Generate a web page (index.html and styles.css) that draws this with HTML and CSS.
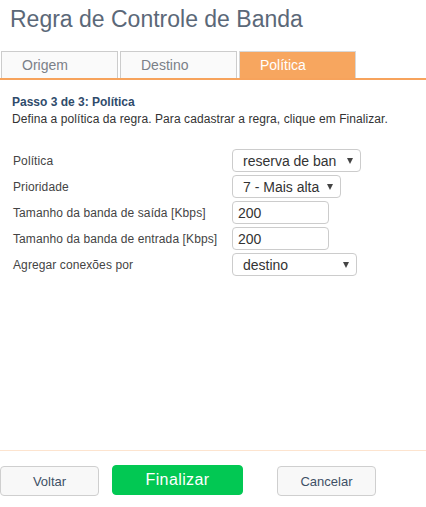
FILE: index.html
```html
<!DOCTYPE html>
<html lang="pt">
<head>
<meta charset="utf-8">
<title>Regra de Controle de Banda</title>
<link rel="stylesheet" href="styles.css">
</head>
<body>
<div class="page">
  <h1 class="title">Regra de Controle de Banda</h1>
  <div class="tabs">
    <div class="tab">Origem</div>
    <div class="tab">Destino</div>
    <div class="tab active">Política</div>
  </div>
  <div class="content">
    <div class="step">Passo 3 de 3: Política</div>
    <div class="desc">Defina a política da regra. Para cadastrar a regra, clique em Finalizar.</div>
    <div class="form">
      <div class="row">
        <label class="lbl">Política</label>
        <div class="sel w1"><span class="val">reserva de ban</span><i class="arrow"></i></div>
      </div>
      <div class="row">
        <label class="lbl">Prioridade</label>
        <div class="sel w2"><span class="val">7 - Mais alta</span><i class="arrow"></i></div>
      </div>
      <div class="row">
        <label class="lbl">Tamanho da banda de saída [Kbps]</label>
        <div class="inp">200</div>
      </div>
      <div class="row">
        <label class="lbl">Tamanho da banda de entrada [Kbps]</label>
        <div class="inp">200</div>
      </div>
      <div class="row">
        <label class="lbl">Agregar conexões por</label>
        <div class="sel w3"><span class="val">destino</span><i class="arrow"></i></div>
      </div>
    </div>
  </div>
  <div class="footer">
    <button class="btn">Voltar</button>
    <button class="btn primary">Finalizar</button>
    <button class="btn cancel">Cancelar</button>
  </div>
</div>
</body>
</html>
```
FILE: styles.css
```css
html, body {
  margin: 0;
  padding: 0;
  background: #fff;
  font-family: "Liberation Sans", Arial, sans-serif;
}
.page {
  width: 426px;
  height: 507px;
  display: flex;
  flex-direction: column;
}
.title {
  margin: 0;
  height: 51px;
  box-sizing: border-box;
  padding: 5px 0 0 10px;
  font-size: 23px;
  font-weight: normal;
  color: #5b6878;
  line-height: 28px;
}
.tabs {
  display: flex;
  gap: 2px;
  padding-left: 1px;
  border-bottom: 2px solid #f7a35c;
  height: 27px;
}
.tab {
  width: 117px;
  box-sizing: border-box;
  border: 1px solid #cccccc;
  border-bottom: none;
  background: #fafafa;
  color: #7a8088;
  font-size: 14px;
  line-height: 26px;
  padding-left: 20px;
}
.tab.active {
  background: #f7a65f;
  color: #fff;
  border-color: #d8d8d8;
}
.content {
  flex: 1;
  padding: 15px 0 0 12px;
}
.step {
  font-size: 12px;
  font-weight: bold;
  color: #2f4b6b;
  line-height: 15px;
}
.desc {
  font-size: 12px;
  color: #333;
  line-height: 15px;
  margin-top: 2px;
  letter-spacing: 0.08px;
}
.form {
  margin-top: 22px;
  display: flex;
  flex-direction: column;
  gap: 3px;
}
.row {
  display: flex;
  align-items: center;
  height: 23px;
}
.lbl {
  width: 219px;
  padding-left: 1px;
  font-size: 12px;
  color: #444;
  letter-spacing: 0.1px;
}
.sel, .inp {
  box-sizing: border-box;
  height: 23px;
  border: 1px solid #cccccc;
  border-radius: 4px;
  font-size: 14px;
  color: #333;
  display: flex;
  align-items: center;
  background: #fff;
}
.sel {
  padding-left: 10px;
  position: relative;
}
.val {
  white-space: nowrap;
}
.inp { padding-left: 5px; width: 97px; }
.w1 { width: 129px; }
.w2 { width: 109px; }
.w3 { width: 125px; }
.arrow {
  position: absolute;
  right: 7px;
  top: 8px;
  width: 0;
  height: 0;
  border-left: 3px solid transparent;
  border-right: 3px solid transparent;
  border-top: 6px solid #444;
}
.footer {
  border-top: 1px solid #fde4cf;
  height: 57px;
  display: flex;
  align-items: flex-start;
  padding-top: 14px;
  box-sizing: border-box;
}
.btn {
  font-family: "Liberation Sans", Arial, sans-serif;
  box-sizing: border-box;
  height: 30px;
  width: 99px;
  border: 1px solid #cfcfcf;
  border-radius: 4px;
  background: #f8f8f8;
  color: #3e5066;
  font-size: 13px;
  padding: 0;
  margin-top: 1px;
}
.btn.primary {
  margin-left: 13px;
  margin-top: 0;
  width: 131px;
  background: #02c853;
  border-color: #02c853;
  color: #fff;
  font-size: 16px;
  letter-spacing: 0.4px;
}
.btn.cancel {
  margin-left: 34px;
}
```
